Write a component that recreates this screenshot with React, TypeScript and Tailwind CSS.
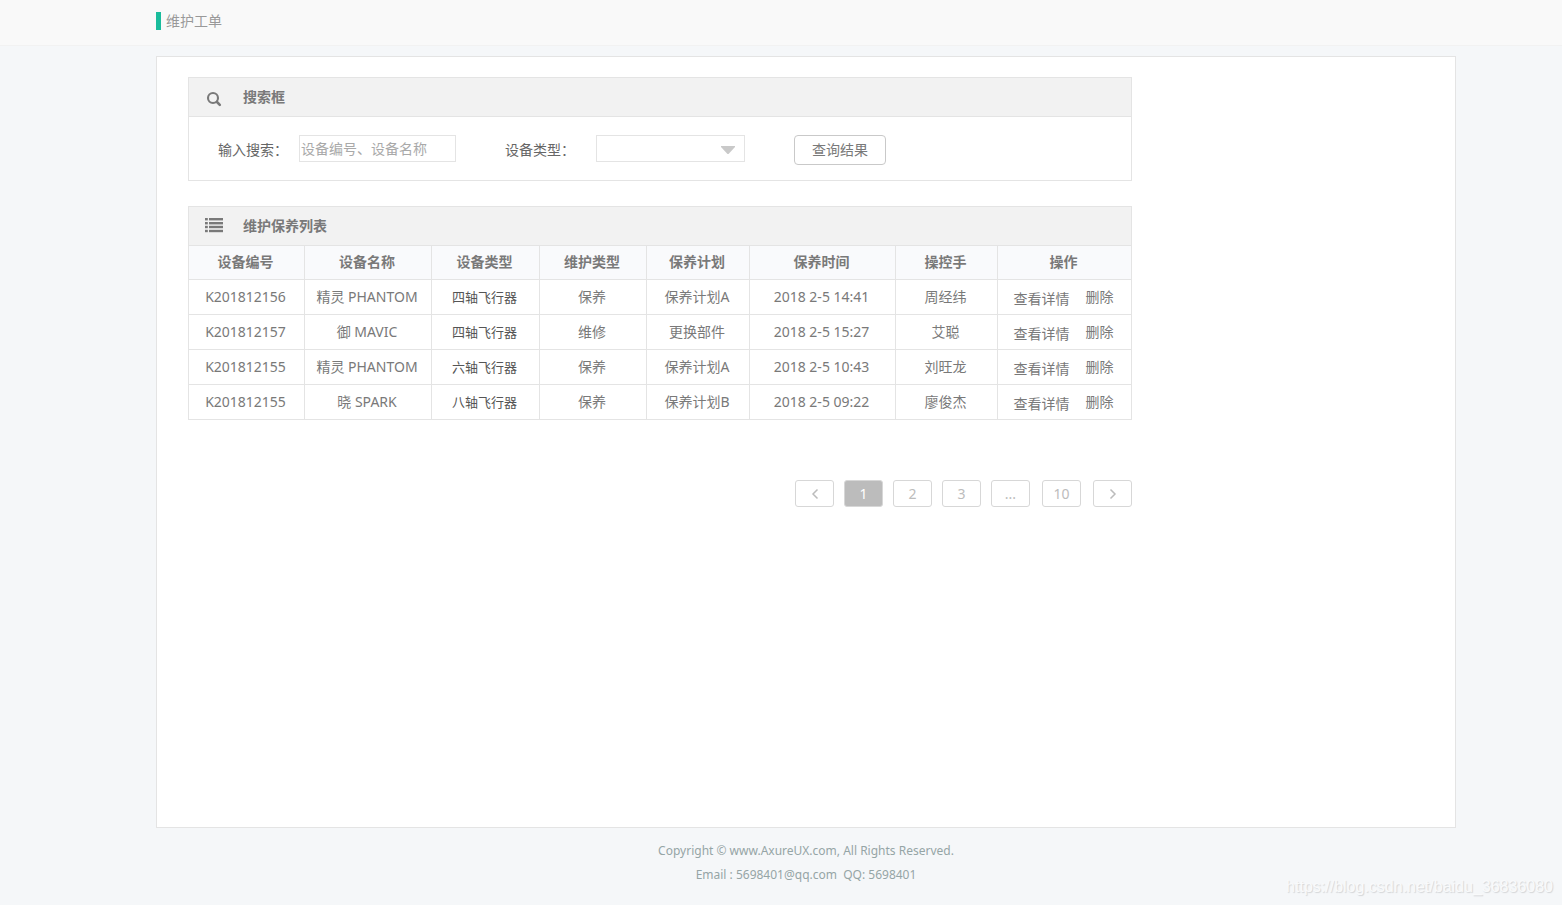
import type { ReactNode } from "react";

const columns = [
  { title: "设备编号", width: "w-[115px]" },
  { title: "设备名称", width: "w-[127px]" },
  { title: "设备类型", width: "w-[108px]" },
  { title: "维护类型", width: "w-[107px]" },
  { title: "保养计划", width: "w-[103px]" },
  { title: "保养时间", width: "w-[146px]" },
  { title: "操控手", width: "w-[102px]" },
  { title: "操作", width: "w-[134px]" },
];

const orders = [
  { id: "K201812156", name: "精灵 PHANTOM", type: "四轴飞行器", service: "保养", plan: "保养计划A", time: "2018 2-5 14:41", pilot: "周经纬" },
  { id: "K201812157", name: "御 MAVIC", type: "四轴飞行器", service: "维修", plan: "更换部件", time: "2018 2-5 15:27", pilot: "艾聪" },
  { id: "K201812155", name: "精灵 PHANTOM", type: "六轴飞行器", service: "保养", plan: "保养计划A", time: "2018 2-5 10:43", pilot: "刘旺龙" },
  { id: "K201812155", name: "晓 SPARK", type: "八轴飞行器", service: "保养", plan: "保养计划B", time: "2018 2-5 09:22", pilot: "廖俊杰" },
];

function SearchIcon() {
  return (
    <svg width="20" height="20" viewBox="0 0 20 20" fill="none" stroke="currentColor" strokeLinecap="round">
      <circle cx="8" cy="11" r="5" strokeWidth="2.1" />
      <path d="M12 15l2.8 2.8" strokeWidth="2.6" />
    </svg>
  );
}

function ListIcon() {
  return (
    <svg width="18" height="16" viewBox="0 0 18 16" fill="currentColor">
      {[0, 4, 7.8, 11.8].map((y) => (
        <g key={y}>
          <rect x="0" y={y} width="2.8" height="2.4" />
          <rect x="4" y={y} width="14" height="2.4" />
        </g>
      ))}
    </svg>
  );
}

function PanelHeader({ icon, title }: { icon: ReactNode; title: string }) {
  return (
    <div className="flex h-[38px] items-center bg-[#f2f2f2] pl-4 text-[#797979]">
      <span className="flex w-[38px] items-center">{icon}</span>
      <h2 className="text-sm font-bold">{title}</h2>
    </div>
  );
}

function PageButton({ children, active, label }: { children: ReactNode; active?: boolean; label?: string }) {
  return (
    <button
      type="button"
      aria-label={label}
      className={`flex h-[27px] w-[39px] items-center justify-center rounded-[3px] border border-[#d7d7d7] text-sm ${
        active ? "bg-[#bcbcbc] text-white" : "bg-white text-[#bcbcbc]"
      }`}
    >
      {children}
    </button>
  );
}

function Chevron({ d }: { d: string }) {
  return (
    <svg width="8" height="12" viewBox="0 0 8 12" fill="none" stroke="currentColor" strokeWidth="1.5">
      <path d={d} />
    </svg>
  );
}

export default function App() {
  return (
    <div
      lang="zh-CN"
      className="flex min-h-screen flex-col bg-[#f5f7f9] font-['Noto_Sans','Noto_Sans_CJK_SC',sans-serif] text-sm text-[#797979]"
    >
      <header className="flex h-[46px] items-center border-b border-[#f2f2f2] bg-[#f9f9f9] pr-[106px] pb-1 pl-[156px]">
        <span className="mr-[5px] h-[18px] w-[5px] bg-[#1abc9c]" />
        <h1 className="text-sm text-[#999999]">维护工单</h1>
      </header>

      <main className="mt-[10px] mr-[106px] ml-[156px] flex-1 border border-[#e4e4e4] bg-white pt-5 pr-8 pl-[31px]">
        <div className="max-w-[944px]">
          <section className="border border-[#e4e4e4]">
            <PanelHeader icon={<SearchIcon />} title="搜索框" />
            <form className="flex items-start border-t border-[#e4e4e4] pt-[18px] pb-[15px] pl-[29px]">
              <label htmlFor="keyword" className="w-[81px] leading-[30px] text-[#666666]">
                输入搜索：
              </label>
              <input
                id="keyword"
                type="text"
                placeholder="设备编号、设备名称"
                className="h-[27px] w-[157px] border border-[#e4e4e4] px-px outline-none placeholder:text-[#a9a9a9]"
              />
              <label htmlFor="device-type" className="ml-[49px] w-[91px] leading-[30px] text-[#666666]">
                设备类型：
              </label>
              <div className="relative">
                <select id="device-type" className="block h-[27px] w-[149px] appearance-none border border-[#e4e4e4] bg-white px-2 outline-none">
                  <option value=""></option>
                </select>
                <svg className="pointer-events-none absolute top-[11px] right-[10px]" width="14" height="8" viewBox="0 0 14 8" fill="#c9c9c9">
                  <path d="M0 0h14v1L8 7.5q-1 1-2 0L0 1z" />
                </svg>
              </div>
              <button type="button" className="ml-[49px] h-[30px] w-[92px] rounded border border-[#c9c9c9] bg-white">
                查询结果
              </button>
            </form>
          </section>

          <section className="mt-[25px] border border-[#e4e4e4]">
            <PanelHeader icon={<ListIcon />} title="维护保养列表" />
            <table className="w-full table-fixed border-separate border-spacing-0 text-center">
              <thead>
                <tr className="h-[34px] bg-[#f9fafc]">
                  {columns.map((col) => (
                    <th key={col.title} className={`border-t border-l border-[#e4e4e4] p-0 pr-0.5 pb-0.5 font-bold first:border-l-0 ${col.width}`}>
                      {col.title}
                    </th>
                  ))}
                </tr>
              </thead>
              <tbody className="[&_td]:border-t [&_td]:border-l [&_td]:border-[#e4e4e4] [&_td]:p-0 [&_td]:pr-0.5 [&_td:first-child]:border-l-0">
                {orders.map((order, i) => (
                  <tr key={i} className="h-[35px]">
                    <td>{order.id}</td>
                    <td>{order.name}</td>
                    <td className="text-[13px] text-[#555555]">{order.type}</td>
                    <td>{order.service}</td>
                    <td>{order.plan}</td>
                    <td>{order.time}</td>
                    <td>{order.pilot}</td>
                    <td>
                      <div className="flex items-center justify-center gap-4">
                        <a href="#detail" className="pt-1">查看详情</a>
                        <a href="#delete">删除</a>
                      </div>
                    </td>
                  </tr>
                ))}
              </tbody>
            </table>
          </section>

          <nav aria-label="分页" className="mt-[60px] flex justify-end gap-3">
            <div className="flex gap-[10px]">
              <PageButton label="上一页">
                <Chevron d="M6.5 1.5L2 6l4.5 4.5" />
              </PageButton>
              <PageButton active>1</PageButton>
              <PageButton>2</PageButton>
              <PageButton>3</PageButton>
              <PageButton>...</PageButton>
            </div>
            <PageButton>10</PageButton>
            <PageButton label="下一页">
              <Chevron d="M1.5 1.5L6 6l-4.5 4.5" />
            </PageButton>
          </nav>
        </div>
      </main>

      <footer className="relative mr-[106px] ml-[156px] h-[77px] pt-[11px] text-center text-xs leading-6 text-[#95a5a6]">
        <p className="leading-6">Copyright © www.AxureUX.com, All Rights Reserved.</p>
        <p className="leading-6 whitespace-pre">Email : 5698401@qq.com  QQ: 5698401</p>
        <span className="absolute -right-[97px] bottom-2 font-['Liberation_Sans',sans-serif] text-base leading-5 text-[#f9fafb] [text-shadow:1px_1px_1px_#d3d5d7]">
          https://blog.csdn.net/baidu_36836080
        </span>
      </footer>
    </div>
  );
}
